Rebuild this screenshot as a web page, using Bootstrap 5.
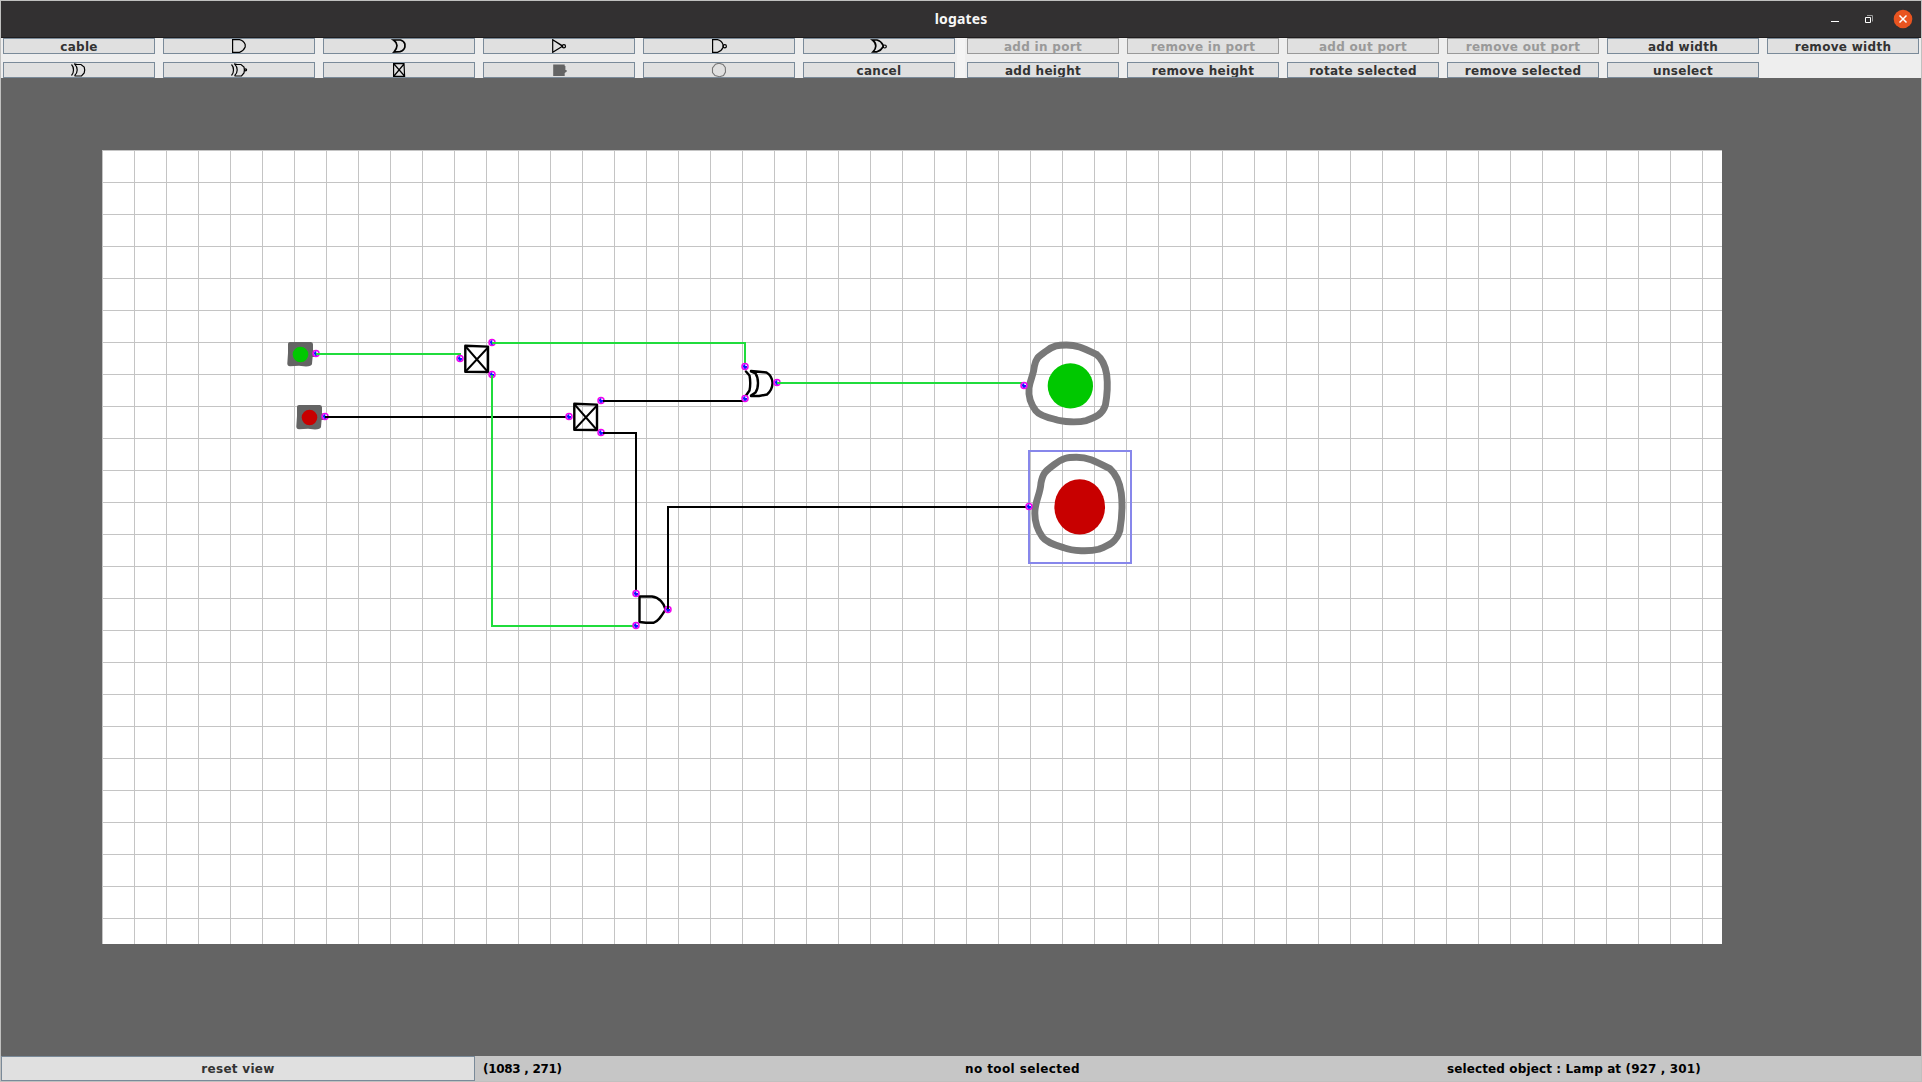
<!DOCTYPE html>
<html lang="en">
<head>
<meta charset="utf-8">
<title>logates</title>
<link href="https://cdn.jsdelivr.net/npm/bootstrap@5.3.0/dist/css/bootstrap.min.css" rel="stylesheet">
<style>
  body { height: 1082px; overflow: hidden; font: bold 12px/14px "DejaVu Sans", sans-serif; color: #000; }
  .app-window { height: 1082px; border: 1px solid #c0c0bf; background: #646464; }
  .title-bar { height: 37px; background: #323031; border-bottom: 1px solid #1f1c1d; color: #f7f7f7; }
  .title-text { font: bold 14px/18px "Noto Sans", sans-serif; letter-spacing: .15px; }
  .window-controls { width: 100px; height: 36px; }
  .tool-bar { height: 40px; background: #eee; }
  .tool-group { display: grid; grid-template-columns: repeat(6, 152px); grid-auto-rows: 16px; gap: 8px; }
  .tool-group-left { width: 956px; padding-left: 2px; }
  .tool-gap { width: 8px; background: #f4f4f4; }
  .tool-group-right { padding-left: 2px; }
  .tool-btn { --bs-btn-padding-x: 0; --bs-btn-padding-y: 0; --bs-btn-border-radius: 0;
    --bs-btn-color: #333; --bs-btn-bg: #e0e0e0; --bs-btn-border-color: #7a8a99;
    --bs-btn-disabled-color: #999; --bs-btn-disabled-bg: #e0e0e0; --bs-btn-disabled-border-color: #999; --bs-btn-disabled-opacity: 1;
    --bs-btn-font-size: 12px; --bs-btn-font-weight: 700; --bs-btn-line-height: 14px;
    letter-spacing: .3px; overflow: hidden; height: 100%; }
  .tool-group .tool-btn:not(.icon-btn) { display: flex; align-items: flex-start; justify-content: center; padding-top: 1px; }
  .tool-btn svg { width: 14px; height: 14px; flex: none; overflow: visible; fill: none; stroke: #000; stroke-width: 1.2; }
  .tool-btn .thick { stroke-width: 1.7; }
  .stage { padding: 72px 0 0 101px; }
  .board { width: 1620px; height: 794px; display: block; background: #fff; }
  .wire { fill: none; stroke: #000; stroke-width: 2; }
  .wire-on { stroke: #20dc3c; }
  .gate { fill: none; stroke: #000; stroke-width: 2.4; stroke-linecap: round; stroke-linejoin: round; }
  .status-bar { height: 25px; background: #c6c6c6; display: grid; grid-template-columns: repeat(4, 474px); column-gap: 8px; letter-spacing: .12px; }
  .coords { letter-spacing: -.3px; }
  .tool-state { letter-spacing: .4px; }
</style>
<script src="https://cdn.jsdelivr.net/npm/bootstrap@5.3.0/dist/js/bootstrap.bundle.min.js"></script>
</head>
<body>
<div class="app-window d-flex flex-column">
  <header class="title-bar d-flex align-items-center justify-content-between flex-shrink-0">
    <div class="window-controls"></div>
    <div class="title-text">logates</div>
    <svg class="window-controls" viewBox="1821 1 100 36" fill="none">
      <path d="M1831 21.500h8" stroke="#fff"/>
      <path d="M1867 15.500h5.500v6" stroke="#999"/>
      <path d="M1865.500 17.500h5v5h-5z" stroke="#fff"/>
      <circle cx="1903" cy="19" r="9.300" fill="#e95420"/>
      <path d="M1899.500 15.500l7 7m0-7l-7 7" stroke="#fff" stroke-width="1.500"/>
    </svg>
  </header>

  <nav class="tool-bar d-flex flex-shrink-0">
    <div class="tool-group tool-group-left">
      <button class="btn tool-btn">cable</button>
      <button class="btn tool-btn icon-btn d-flex align-items-center justify-content-center" aria-label="and"><svg viewBox="0 0 14 14"><path d="M.6.6H7.500Q11.500 1.500 13.200 5.500V8Q11.500 12 7.500 13.400H.6z"/></svg></button>
      <button class="btn tool-btn icon-btn d-flex align-items-center justify-content-center" aria-label="or"><svg viewBox="0 0 14 14"><path class="thick" d="M1.500 1H8.500Q12 2 12.900 5V8Q12 11.500 8 12.600L2 13Q5 9.500 5 6.500Q4.500 3 1.500 1z"/></svg></button>
      <button class="btn tool-btn icon-btn d-flex align-items-center justify-content-center" aria-label="not"><svg viewBox="0 0 14 14"><path d="M.7.7V13.300L10.500 7.200zM.7.7L10.500 6.800"/><circle cx="11.900" cy="7.200" r="1.600"/></svg></button>
      <button class="btn tool-btn icon-btn d-flex align-items-center justify-content-center" aria-label="nand"><svg viewBox="0 0 14 14"><path d="M.6.6H5.500Q9.500 1.500 11 5.500V8.500Q9.500 12 5.500 13.400H.6z"/><circle cx="12.800" cy="7.200" r="1.600"/></svg></button>
      <button class="btn tool-btn icon-btn d-flex align-items-center justify-content-center" aria-label="nor"><svg viewBox="0 0 14 14"><path class="thick" d="M.5 1H5Q9 2 11 6V8Q9 11.500 5 12.800H1Q3.800 10 3.800 7Q3.800 3.500.5 1z"/><circle cx="12.800" cy="7.500" r="1.500"/></svg></button>
      <button class="btn tool-btn icon-btn d-flex align-items-center justify-content-center" aria-label="xor"><svg viewBox="0 0 14 14"><path d="M-.5 1.500Q1.500 3.500 1.500 7T-.5 12.500M2.500.8Q5.200 3.500 5.200 7T2.500 12.800M2 .8L5 1.500H9L12.200 4Q13.200 7 12.200 10L9.500 13H2.500"/></svg></button>
      <button class="btn tool-btn icon-btn d-flex align-items-center justify-content-center" aria-label="xnor"><svg viewBox="0 0 14 14"><path d="M-.5 1.500Q1.500 3.500 1.500 7T-.5 12.500M2.500.8Q5.200 3.500 5.200 7T2.500 12.800M2 .8L5 1.500H9L12 4Q12.800 7 12 10L9.500 13H2.500"/><circle cx="13.600" cy="6.800" r="1"/></svg></button>
      <button class="btn tool-btn icon-btn d-flex align-items-center justify-content-center" aria-label="splitter"><svg viewBox="0 0 14 14"><path d="M1.600.7H12L12.600 13.300H1.600zM2 1L12.500 13M12 1L2 13"/></svg></button>
      <button class="btn tool-btn icon-btn d-flex align-items-center justify-content-center" aria-label="switch"><svg viewBox="0 0 14 14"><path fill="#646464" stroke="none" d="M1.200 1.500H12.700V3H13.400V7H14.600V9H13.400V10H12.700V13H1.200z"/></svg></button>
      <button class="btn tool-btn icon-btn d-flex align-items-center justify-content-center" aria-label="lamp"><svg viewBox="0 0 14 14"><path stroke="#777" stroke-width="1.100" d="M3.500 1.200L7 .2L11 1.500L13.300 4.500L13.500 9L11.500 12.500L7.500 13.700L3 12.500L.5 9.500L.5 5z"/></svg></button>
      <button class="btn tool-btn">cancel</button>
    </div>
    <div class="tool-gap"></div>
    <div class="tool-group tool-group-right">
      <button class="btn tool-btn" disabled>add in port</button>
      <button class="btn tool-btn" disabled>remove in port</button>
      <button class="btn tool-btn" disabled>add out port</button>
      <button class="btn tool-btn" disabled>remove out port</button>
      <button class="btn tool-btn">add width</button>
      <button class="btn tool-btn">remove width</button>
      <button class="btn tool-btn">add height</button>
      <button class="btn tool-btn">remove height</button>
      <button class="btn tool-btn">rotate selected</button>
      <button class="btn tool-btn">remove selected</button>
      <button class="btn tool-btn">unselect</button>
    </div>
  </nav>

  <main class="stage flex-grow-1">
    <svg class="board" viewBox="102 150 1620 794">
      <defs>
        <pattern id="grid" x="102" y="150" width="32" height="32" patternUnits="userSpaceOnUse">
          <path d="M0 0H32V1H1V32H0z" fill="#c4c4c4" shape-rendering="crispEdges"/>
        </pattern>
        <g id="port">
          <circle r="3" fill="#fff" stroke="#f000f0" stroke-width="1.500"/>
          <path d="M-2.300-.5L-.5-2.300H.3V-.5H2V1L.8 2.300H-1z" fill="#1010ff"/>
        </g>
        <g id="splitter" class="gate">
          <path d="M465.300 345.800L488 346.600L488 372L465.300 371.800z"/>
          <path d="M466.500 347.500L487.500 371.500M487.500 348L466.500 370.500" stroke-width="1.900"/>
        </g>
        <path id="switch" d="M290 342H311Q313 342 313 344.500V350.500H316V357H312.600L312 364Q311.500 366.200 306 366.600L299 365.700L290 366.300Q287.300 366 287.300 363.500L288 353V344Q288 342 290 342z" fill="#646464"/>
        <path id="lamp" d="M200 76C230 76 245 83 290 104C310 120 318 145 321 165C324 190 323 225 317 257C308 285 288 293 260 303C235 309 190 308 165 299C140 293 115 282 108 273C92 252 86 225 88 205C91 180 102 165 104 140C110 112 118 110 140 94C162 78 175 76 200 76Z" fill="none" stroke="#787878" stroke-width="6.900" vector-effect="non-scaling-stroke"/>
      </defs>
      <rect x="102" y="150" width="1620" height="794" fill="url(#grid)"/>

      <use href="#switch"/><circle cx="300.500" cy="354.500" r="7.800" fill="#00c800"/>
      <use href="#switch" x="9" y="63"/><circle cx="309.500" cy="417.500" r="7.800" fill="#c80000"/>
      <use href="#splitter"/>
      <use href="#splitter" x="109" y="58"/>
      <g class="gate">
        <path d="M746 371.500L749.500 375.500Q751 383 749.500 390.500L746 395.500M751 371.500L755.500 373.500Q758 377 758 383T755.500 392.500L751 395.500M751 371L759 371.800L766.500 372.500Q772.300 376 772.500 383Q772.300 390 767 394.500L759 396H751"/>
        <path d="M639.500 596.500H652C659 597.500 664 603 665.500 609.500C661 617 658 621.500 653.500 622.800H646L639.500 622z"/>
      </g>
      <g transform="translate(999.700 319.600) scale(.33333)">
        <use href="#lamp"/>
        <circle cx="212" cy="199" r="68" fill="#00c800"/>
        <use href="#lamp" transform="translate(8.200 320.500) scale(1.111 1.216)"/>
        <ellipse cx="240" cy="562" rx="76" ry="83" fill="#c80000"/>
      </g>

      <g>
        <use href="#port" x="316" y="353.500"/><use href="#port" x="325" y="416.500"/>
        <use href="#port" x="492" y="342.500"/><use href="#port" x="492" y="374.500"/>
        <use href="#port" x="601" y="400.500"/><use href="#port" x="601" y="432.500"/>
        <use href="#port" x="777" y="382.500"/><use href="#port" x="668" y="609.500"/>
      </g>

      <path class="wire" d="M325 417H567M603 401H745V399M603 433H636V592M668 609V507H1027"/>
      <path class="wire wire-on" d="M316 354H460V356M492 343H745V364M492 375V626H633M777 383H1023"/>
      <rect x="1029" y="451" width="102" height="112" fill="none" stroke="#8787eb" stroke-width="2"/>

      <g>
        <use href="#port" x="460" y="358.500"/><use href="#port" x="569" y="416.500"/>
        <use href="#port" x="745" y="366.500"/><use href="#port" x="745" y="398.500"/>
        <use href="#port" x="636" y="593.500"/><use href="#port" x="636" y="625.500"/>
        <use href="#port" x="1024" y="385.500"/><use href="#port" x="1029" y="506.500"/>
      </g>
    </svg>
  </main>

  <footer class="status-bar align-items-center flex-shrink-0">
    <button class="btn tool-btn">reset view</button>
    <div class="coords">(1083 , 271)</div>
    <div class="tool-state">no tool selected</div>
    <div>selected object : Lamp at (927 , 301)</div>
  </footer>
</div>
</body>
</html>
